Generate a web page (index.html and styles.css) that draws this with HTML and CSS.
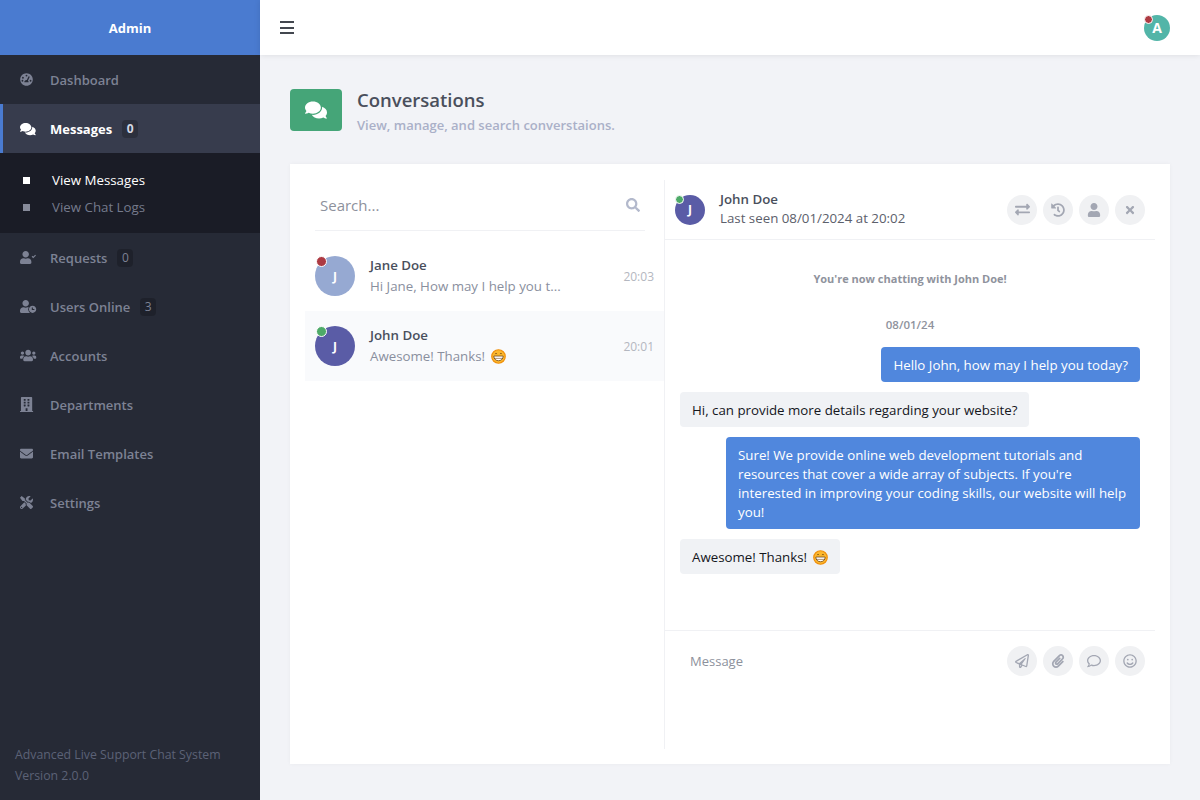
FILE: index.html
```html
<!DOCTYPE html>
<html lang="en">
<head>
    <meta charset="UTF-8">
    <meta name="viewport" content="width=device-width, initial-scale=1.0">
    <title>Conversations</title>
    <link rel="stylesheet" href="styles.css">
</head>
<body>
    <!-- icon set -->
    <svg class="icon-defs" xmlns="http://www.w3.org/2000/svg">
        <symbol id="i-comments" viewBox="0 0 576 512" preserveAspectRatio="xMinYMid meet"><path d="M416 192c0-88.4-93.1-160-208-160S0 103.6 0 192c0 34.3 14.1 65.9 38 92-13.4 30.2-35.5 54.2-35.8 54.5-2.2 2.3-2.8 5.7-1.5 8.7S4.8 352 8 352c36.6 0 66.9-12.3 88.7-25 32.2 15.7 70.3 25 111.3 25 114.9 0 208-71.6 208-160zm122 220c23.9-26 38-57.7 38-92 0-66.9-53.5-124.2-129.3-148.1.9 6.6 1.3 13.3 1.3 20.1 0 105.9-107.7 192-240 192-10.8 0-21.3-.8-31.7-1.9C207.8 439.6 281.8 480 368 480c41 0 79.1-9.2 111.3-25 21.8 12.7 52.1 25 88.7 25 3.2 0 6.1-1.9 7.3-4.8 1.3-2.9.7-6.3-1.5-8.7-.3-.3-22.4-24.2-35.8-54.5z"/></symbol>
        <symbol id="i-search" viewBox="0 0 512 512"><path d="M505 442.7L405.3 343c-4.5-4.5-10.6-7-17-7H372c27.6-35.3 44-79.7 44-128C416 93.1 322.9 0 208 0S0 93.1 0 208s93.1 208 208 208c48.3 0 92.7-16.4 128-44v16.3c0 6.4 2.5 12.5 7 17l99.7 99.7c9.4 9.4 24.6 9.4 33.9 0l28.3-28.3c9.4-9.4 9.4-24.6.1-34zM208 336c-70.7 0-128-57.2-128-128 0-70.7 57.2-128 128-128 70.7 0 128 57.2 128 128 0 70.7-57.2 128-128 128z"/></symbol>
        <symbol id="i-user" viewBox="0 0 448 512"><path d="M224 256c70.7 0 128-57.3 128-128S294.7 0 224 0 96 57.3 96 128s57.3 128 128 128zm89.6 32h-16.7c-22.2 10.2-46.9 16-72.9 16s-50.6-5.8-72.9-16h-16.7C60.2 288 0 348.2 0 422.4V464c0 26.5 21.5 48 48 48h352c26.5 0 48-21.5 48-48v-41.6c0-74.2-60.2-134.4-134.4-134.4z"/></symbol>
        <symbol id="i-user-check" viewBox="0 0 640 512" preserveAspectRatio="xMinYMid meet"><path d="M224 256c70.7 0 128-57.3 128-128S294.7 0 224 0 96 57.3 96 128s57.3 128 128 128zm89.6 32h-16.7c-22.2 10.2-46.9 16-72.9 16s-50.6-5.8-72.9-16h-16.7C60.2 288 0 348.2 0 422.4V464c0 26.5 21.5 48 48 48h352c26.5 0 48-21.5 48-48v-41.6c0-74.2-60.2-134.4-134.4-134.4z"/><path d="M474 206l48 48 92-92" fill="none" stroke="currentColor" stroke-width="44"/></symbol>
        <symbol id="i-user-clock" viewBox="0 0 640 512" preserveAspectRatio="xMinYMid meet"><path d="M224 256c70.7 0 128-57.3 128-128S294.7 0 224 0 96 57.3 96 128s57.3 128 128 128zm89.6 32h-16.7c-22.2 10.2-46.9 16-72.9 16s-50.6-5.8-72.9-16h-16.7C60.2 288 0 348.2 0 422.4V464c0 26.5 21.5 48 48 48h352c26.5 0 48-21.5 48-48v-41.6c0-74.2-60.2-134.4-134.4-134.4z"/><circle cx="496" cy="368" r="172" fill="#262a36"/><path fill-rule="evenodd" d="M496 224c-79.6 0-144 64.4-144 144s64.4 144 144 144 144-64.4 144-144-64.4-144-144-144zm70 170h-102v-100h44v56h58z"/></symbol>
        <symbol id="i-users" viewBox="0 0 640 512" preserveAspectRatio="xMinYMid meet"><path d="M96 224c35.3 0 64-28.7 64-64s-28.7-64-64-64-64 28.7-64 64 28.7 64 64 64zm448 0c35.3 0 64-28.7 64-64s-28.7-64-64-64-64 28.7-64 64 28.7 64 64 64zm32 32h-64c-17.6 0-33.5 7.1-45.1 18.6 40.3 22.1 68.9 62 75.1 109.4h66c17.7 0 32-14.3 32-32v-32c0-35.3-28.7-64-64-64zm-256 0c61.9 0 112-50.1 112-112S381.9 32 320 32 208 82.1 208 144s50.1 112 112 112zm76.8 32h-8.3c-20.8 10-43.9 16-68.5 16s-47.6-6-68.5-16h-8.3C179.6 288 128 339.6 128 403.2V432c0 26.5 21.5 48 48 48h288c26.5 0 48-21.5 48-48v-28.8c0-63.6-51.6-115.2-115.2-115.2zm-223.7-13.4C161.5 263.1 145.6 256 128 256H64c-35.3 0-64 28.7-64 64v32c0 17.7 14.3 32 32 32h65.9c6.3-47.4 34.9-87.3 75.2-109.4z"/></symbol>
        <symbol id="i-building" viewBox="0 0 448 512" preserveAspectRatio="xMinYMid meet"><path d="M436 480h-20V24c0-13.255-10.745-24-24-24H56C42.745 0 32 10.745 32 24v456H12c-6.627 0-12 5.373-12 12v20h448v-20c0-6.627-5.373-12-12-12zM128 76c0-6.627 5.373-12 12-12h40c6.627 0 12 5.373 12 12v40c0 6.627-5.373 12-12 12h-40c-6.627 0-12-5.373-12-12V76zm0 96c0-6.627 5.373-12 12-12h40c6.627 0 12 5.373 12 12v40c0 6.627-5.373 12-12 12h-40c-6.627 0-12-5.373-12-12v-40zm52 148h-40c-6.627 0-12-5.373-12-12v-40c0-6.627 5.373-12 12-12h40c6.627 0 12 5.373 12 12v40c0 6.627-5.373 12-12 12zm76 160h-64v-84c0-6.627 5.373-12 12-12h40c6.627 0 12 5.373 12 12v84zm64-172c0 6.627-5.373 12-12 12h-40c-6.627 0-12-5.373-12-12v-40c0-6.627 5.373-12 12-12h40c6.627 0 12 5.373 12 12v40zm0-96c0 6.627-5.373 12-12 12h-40c-6.627 0-12-5.373-12-12v-40c0-6.627 5.373-12 12-12h40c6.627 0 12 5.373 12 12v40zm0-96c0 6.627-5.373 12-12 12h-40c-6.627 0-12-5.373-12-12V76c0-6.627 5.373-12 12-12h40c6.627 0 12 5.373 12 12v40z"/></symbol>
        <symbol id="i-envelope" viewBox="0 0 512 512" preserveAspectRatio="xMinYMid meet"><path d="M502.3 190.8c3.9-3.1 9.7-.2 9.7 4.7V400c0 26.5-21.5 48-48 48H48c-26.5 0-48-21.5-48-48V195.6c0-5 5.7-7.8 9.7-4.7 22.4 17.4 52.1 39.5 154.1 113.6 21.1 15.4 56.7 47.8 92.2 47.6 35.7.3 72-32.8 92.3-47.6 102-74.1 131.6-96.3 154-113.7zM256 320c23.2.4 56.6-29.2 73.4-41.4 132.7-96.3 142.8-104.7 173.4-128.7 5.8-4.5 9.2-11.5 9.2-18.9v-19c0-26.5-21.5-48-48-48H48C21.5 64 0 85.5 0 112v19c0 7.4 3.4 14.3 9.2 18.9 30.6 23.9 40.7 32.4 173.4 128.7 16.8 12.2 50.2 41.8 73.4 41.4z"/></symbol>
        <symbol id="i-tools" viewBox="0 0 512 512" preserveAspectRatio="xMinYMid meet"><path d="M501.1 395.7L384 278.6c-23.1-23.1-57.6-27.6-85.4-13.9L192 158.1V96L64 0 0 64l96 128h62.1l106.6 106.6c-13.6 27.8-9.2 62.3 13.9 85.4l117.1 117.1c14.6 14.6 38.2 14.6 52.7 0l52.7-52.7c14.5-14.6 14.5-38.2 0-52.7zM331.7 225c28.3 0 54.9 11 74.9 31l19.4 19.4c15.8-6.9 30.8-16.5 43.8-29.5 37.1-37.1 49.7-89.3 37.9-136.7-2.2-9-13.5-12.1-20.1-5.5l-74.4 74.4-67.9-11.3L334 98.9l74.4-74.4c6.6-6.6 3.4-17.9-5.7-20.2-47.4-11.7-99.6.9-136.6 37.9-28.5 28.5-41.9 66.1-41.2 103.6l82.1 82.1c8.1-1.9 16.5-2.9 24.7-2.9zm-103.9 82l-56.7-56.7L18.7 402.8c-25 25-25 65.5 0 90.5s65.5 25 90.5 0l123.6-123.6c-7.6-19.9-9.9-41.6-5-62.7zM64 472c-13.2 0-24-10.8-24-24 0-13.3 10.7-24 24-24s24 10.7 24 24c0 13.2-10.7 24-24 24z"/></symbol>
        <symbol id="i-gauge" viewBox="0 0 512 512" preserveAspectRatio="xMinYMid meet"><path fill-rule="evenodd" d="M256 8C119 8 8 119 8 256s111 248 248 248 248-111 248-248S393 8 256 8zm0 56a36 36 0 1 1 0 72 36 36 0 0 1 0-72zM116 150a36 36 0 1 1 0 72 36 36 0 0 1 0-72zm-20 120a36 36 0 1 1 0 72 36 36 0 0 1 0-72zm320 0a36 36 0 1 1 0 72 36 36 0 0 1 0-72zM340 130l44 20-72 156c18 12 30 30 30 54H170c0-46 38-84 84-84 5 0 11 .6 16 1.5z"/></symbol>
        <symbol id="i-exchange" viewBox="0 0 512 512"><path d="M0 168v-16c0-13.255 10.745-24 24-24h360V80c0-21.367 25.899-32.042 40.971-16.971l80 80c9.372 9.373 9.372 24.569 0 33.941l-80 80C409.956 272.982 384 262.456 384 240v-48H24c-13.255 0-24-10.745-24-24zm488 152H128v-48c0-21.314-25.862-32.08-40.971-16.971l-80 80c-9.372 9.373-9.372 24.569 0 33.941l80 80C102.057 464.982 128 454.365 128 432v-48h360c13.255 0 24-10.745 24-24v-16c0-13.255-10.745-24-24-24z"/></symbol>
        <symbol id="i-history" viewBox="0 0 512 512"><path d="M504 255.531c.253 136.64-111.18 248.372-247.82 248.468-59.015.042-113.223-20.53-155.822-54.911-11.077-8.94-11.905-25.541-1.839-35.607l11.267-11.267c8.609-8.609 22.353-9.551 31.891-1.984C173.062 425.135 212.781 440 256 440c101.705 0 184-82.311 184-184 0-101.705-82.311-184-184-184-48.814 0-93.149 18.969-126.068 49.932l50.754 50.754c10.08 10.08 2.941 27.314-11.313 27.314H24c-8.837 0-16-7.163-16-16V38.627c0-14.254 17.234-21.393 27.314-11.314l49.372 49.372C129.209 34.136 189.552 8 256 8c136.81 0 247.747 110.78 248 247.531zm-180.912 78.784l9.823-12.63c8.138-10.463 6.253-25.542-4.21-33.679L288 256.349V152c0-13.255-10.745-24-24-24h-16c-13.255 0-24 10.745-24 24v135.651l65.409 50.874c10.463 8.137 25.541 6.253 33.679-4.21z"/></symbol>
        <symbol id="i-times" viewBox="0 0 352 512"><path d="M242.72 256l100.07-100.07c12.28-12.28 12.28-32.19 0-44.48l-22.24-22.24c-12.28-12.28-32.19-12.28-44.48 0L176 189.28 75.93 89.21c-12.28-12.28-32.19-12.28-44.48 0L9.21 111.45c-12.28 12.28-12.28 32.19 0 44.48L109.28 256 9.21 356.07c-12.28 12.28-12.28 32.19 0 44.48l22.24 22.24c12.28 12.28 32.2 12.28 44.48 0L176 322.72l100.07 100.07c12.28 12.28 32.2 12.28 44.48 0l22.24-22.24c12.28-12.28 12.28-32.19 0-44.48L242.72 256z"/></symbol>
        <symbol id="i-plane" viewBox="0 0 512 512"><path d="M440 6.5L24 246.4c-34.4 19.9-31.1 70.8 5.7 85.9L144 379.6V464c0 46.4 59.2 65.5 86.6 28.6l43.8-59.1 111.9 46.2c5.9 2.4 12.1 3.6 18.3 3.6 8.2 0 16.3-2.1 23.6-6.2 12.8-7.2 21.6-20 23.9-34.5l59.4-387.2c6.1-40.1-36.9-68.8-71.5-48.9zM192 464v-64.6l36.6 15.1L192 464zm212.6-28.7l-153.8-63.5L391 169.5c10.7-15.5-9.5-33.5-23.7-21.2L155.8 332.6 48 288 464 48l-59.4 387.3z"/></symbol>
        <symbol id="i-clip" viewBox="0 0 448 512"><path d="M43.246 466.142c-58.43-60.289-57.341-157.511 1.386-217.581L254.392 34c44.316-45.332 116.351-45.336 160.671 0 43.89 44.894 43.943 117.329 0 162.276L232.214 383.128c-29.855 30.537-78.633 30.111-107.982-.998-28.275-29.97-27.368-77.473 1.452-106.953l143.743-146.835c6.182-6.314 16.312-6.422 22.626-.241l22.861 22.379c6.315 6.182 6.422 16.312.241 22.626L171.427 319.927c-4.932 5.045-5.236 13.428-.648 18.292 4.372 4.634 11.245 4.711 15.688.165l182.849-186.851c19.613-20.05 19.613-52.524-.011-72.564-19.189-19.627-49.957-19.637-69.154 0L90.39 293.295c-34.763 35.56-35.299 93.12-1.191 128.313 34.01 35.093 88.985 35.137 123.058.286l172.06-175.999c6.177-6.319 16.307-6.433 22.626-.256l22.877 22.364c6.319 6.177 6.434 16.307.256 22.626l-172.06 175.998c-59.576 60.938-155.943 60.216-214.77-.485z"/></symbol>
        <symbol id="i-comment" viewBox="0 0 512 512"><path d="M256 32C114.6 32 0 125.1 0 240c0 49.6 21.4 95 57 130.7C44.5 421.1 2.7 466 2.2 466.5c-2.2 2.3-2.8 5.7-1.5 8.7S4.8 480 8 480c66.3 0 116-31.8 140.6-51.4 32.7 12.3 69 19.4 107.4 19.4 141.4 0 256-93.1 256-208S397.4 32 256 32zm0 368c-26.7 0-53.1-4.1-78.4-12.1l-22.7-7.2-19.5 13.8c-14.3 10.1-33.9 21.4-57.5 29 7.3-12.1 14.4-25.7 19.9-40.2l10.6-28.1-20.6-21.8C69.7 314.1 48 282.2 48 240c0-88.2 93.3-160 208-160s208 71.8 208 160-93.3 160-208 160z"/></symbol>
        <symbol id="i-smile" viewBox="0 0 496 512"><path d="M248 8C111 8 0 119 0 256s111 248 248 248 248-111 248-248S385 8 248 8zm0 448c-110.3 0-200-89.7-200-200S137.7 56 248 56s200 89.7 200 200-89.7 200-200 200zm-80-216c17.7 0 32-14.3 32-32s-14.3-32-32-32-32 14.3-32 32 14.3 32 32 32zm160 0c17.7 0 32-14.3 32-32s-14.3-32-32-32-32 14.3-32 32 14.3 32 32 32zm4 72.6c-20.8 25-51.5 39.4-84 39.4s-63.2-14.3-84-39.4c-8.5-10.2-23.7-11.5-33.8-3.1-10.2 8.5-11.5 23.6-3.1 33.8 30 36 74.1 56.6 120.9 56.6s90.9-20.6 120.9-56.6c8.5-10.2 7.1-25.3-3.1-33.8-10.1-8.4-25.3-7.1-33.8 3.1z"/></symbol>
        <symbol id="i-grin" viewBox="0 0 16 16">
            <circle cx="8" cy="8" r="7.2" fill="#fcb82e" stroke="#f0900c" stroke-width="1.3"/>
            <path d="M4.4 5.4c.4-.9 1.6-.9 2 0M9.6 5.4c.4-.9 1.6-.9 2 0" fill="none" stroke="#6b3f10" stroke-width=".9"/>
            <path d="M3 7.5h10c0 3-2.2 5-5 5s-5-2-5-5z" fill="#fff" stroke="#6b3f10" stroke-width=".8"/>
            <path d="M3.3 10h9.400" stroke="#6b3f10" stroke-width=".6"/>
        </symbol>
    </svg>

    <div class="app">
        <aside class="sidebar">
            <div class="brand">Admin</div>
            <nav class="nav">
                <a class="nav-item" href="#"><svg class="nav-icon"><use href="#i-gauge"/></svg><span>Dashboard</span></a>
                <a class="nav-item active" href="#"><svg class="nav-icon tall"><use href="#i-comments"/></svg><span>Messages</span><span class="count">0</span></a>
                <div class="sub-nav">
                    <a class="sub-item active" href="#">View Messages</a>
                    <a class="sub-item" href="#">View Chat Logs</a>
                </div>
                <a class="nav-item" href="#"><svg class="nav-icon"><use href="#i-user-check"/></svg><span>Requests</span><span class="count">0</span></a>
                <a class="nav-item" href="#"><svg class="nav-icon"><use href="#i-user-clock"/></svg><span>Users Online</span><span class="count">3</span></a>
                <a class="nav-item" href="#"><svg class="nav-icon"><use href="#i-users"/></svg><span>Accounts</span></a>
                <a class="nav-item" href="#"><svg class="nav-icon taller"><use href="#i-building"/></svg><span>Departments</span></a>
                <a class="nav-item" href="#"><svg class="nav-icon"><use href="#i-envelope"/></svg><span>Email Templates</span></a>
                <a class="nav-item" href="#"><svg class="nav-icon"><use href="#i-tools"/></svg><span>Settings</span></a>
            </nav>
            <div class="sidebar-footer">
                <div>Advanced Live Support Chat System</div>
                <div>Version 2.0.0</div>
            </div>
        </aside>

        <div class="main">
            <header class="topbar">
                <button class="menu-btn" aria-label="Menu"><span></span><span></span><span></span></button>
                <div class="avatar avatar-sm teal">A<i class="dot red"></i></div>
            </header>

            <main class="content">
                <div class="page-title">
                    <div class="page-icon"><svg><use href="#i-comments"/></svg></div>
                    <div>
                        <h2>Conversations</h2>
                        <p>View, manage, and search converstaions.</p>
                    </div>
                </div>

                <section class="card">
                    <div class="conversations">
                        <div class="search">
                            <input type="text" placeholder="Search...">
                            <svg><use href="#i-search"/></svg>
                        </div>
                        <div class="conv">
                            <div class="avatar light">J<i class="dot red"></i></div>
                            <div class="conv-text">
                                <div class="conv-name">Jane Doe</div>
                                <div class="conv-msg">Hi Jane, How may I help you t...</div>
                            </div>
                            <div class="conv-time">20:03</div>
                        </div>
                        <div class="conv selected">
                            <div class="avatar indigo">J<i class="dot green"></i></div>
                            <div class="conv-text">
                                <div class="conv-name">John Doe</div>
                                <div class="conv-msg">Awesome! Thanks! <svg class="emoji"><use href="#i-grin"/></svg></div>
                            </div>
                            <div class="conv-time">20:01</div>
                        </div>
                    </div>

                    <div class="chat">
                        <div class="chat-header">
                            <div class="avatar avatar-md indigo">J<i class="dot green"></i></div>
                            <div class="chat-who">
                                <div class="conv-name">John Doe</div>
                                <div class="last-seen">Last seen 08/01/2024 at 20:02</div>
                            </div>
                            <div class="actions">
                                <button class="round-btn"><svg class="wide"><use href="#i-exchange"/></svg></button>
                                <button class="round-btn"><svg><use href="#i-history"/></svg></button>
                                <button class="round-btn"><svg><use href="#i-user"/></svg></button>
                                <button class="round-btn"><svg class="small"><use href="#i-times"/></svg></button>
                            </div>
                        </div>
                        <div class="messages">
                            <div class="note">You're now chatting with John Doe!</div>
                            <div class="date">08/01/24</div>
                            <div class="bubble mine">Hello John, how may I help you today?</div>
                            <div class="bubble">Hi, can provide more details regarding your website?</div>
                            <div class="bubble mine">Sure! We provide online web development tutorials and resources that cover a wide array of subjects. If you're interested in improving your coding skills, our website will help you!</div>
                            <div class="bubble">Awesome! Thanks! <svg class="emoji"><use href="#i-grin"/></svg></div>
                        </div>
                        <div class="composer">
                            <input type="text" placeholder="Message">
                            <div class="actions">
                                <button class="round-btn"><svg><use href="#i-plane"/></svg></button>
                                <button class="round-btn"><svg><use href="#i-clip"/></svg></button>
                                <button class="round-btn"><svg><use href="#i-comment"/></svg></button>
                                <button class="round-btn"><svg><use href="#i-smile"/></svg></button>
                            </div>
                        </div>
                    </div>
                </section>
            </main>
        </div>
    </div>
</body>
</html>
```

FILE: styles.css
```css
* {
    box-sizing: border-box;
}

body {
    margin: 0;
    font-family: "Open Sans", "Noto Sans", Arial, sans-serif;
    font-size: 13.3px;
    color: #4a4f5c;
    background-color: #f2f3f7;
    overflow: hidden;
}

a {
    text-decoration: none;
    color: inherit;
}

.icon-defs {
    display: none;
}

.app {
    display: flex;
    height: 100vh;
}

/* sidebar */
.sidebar {
    width: 260px;
    flex-shrink: 0;
    display: flex;
    flex-direction: column;
    background-color: #262a36;
}

.brand {
    height: 55px;
    display: flex;
    align-items: center;
    justify-content: center;
    background-color: #4a7bd0;
    color: #fff;
    font-size: 13px;
    font-weight: 700;
}

.nav-item {
    height: 49px;
    display: flex;
    align-items: center;
    padding-left: 20px;
    color: #7d8294;
    font-size: 13px;
    font-weight: 600;
}

.nav-item.active {
    padding-left: 17px;
    border-left: 3px solid #4a7bd0;
    background-color: #373c4d;
    color: #fff;
    font-weight: 700;
}

.nav-icon {
    width: 30px;
    height: 13px;
    flex-shrink: 0;
    fill: #7d8294;
    color: #7d8294;
}

.nav-icon.tall {
    height: 14px;
}

.nav-icon.taller {
    height: 15px;
}

.nav-item.active .nav-icon {
    fill: #fff;
}

.count {
    min-width: 16px;
    height: 18px;
    margin-left: 10px;
    padding: 0 4px;
    border-radius: 4px;
    background-color: rgba(0, 0, 0, 0.2);
    font-size: 12px;
    line-height: 18px;
    font-weight: 500;
    text-align: center;
}

.active .count {
    color: #d4d8e4;
    font-weight: 700;
}

.sub-nav {
    padding: 13px 0;
    background-color: #1a1c26;
}

.sub-item {
    position: relative;
    display: flex;
    align-items: center;
    height: 27px;
    padding-left: 52px;
    color: #757a8c;
}

.sub-item::before {
    content: "";
    position: absolute;
    left: 23px;
    top: 11px;
    width: 7px;
    height: 7px;
    background-color: #878b9a;
}

.sub-item.active {
    color: #fff;
}

.sub-item.active::before {
    background-color: #fff;
}

.sidebar-footer {
    margin-top: auto;
    padding: 0 15px 14px;
    color: #5c6277;
    font-size: 12.3px;
    line-height: 21px;
}

/* top bar */
.main {
    flex: 1;
    min-width: 0;
    display: flex;
    flex-direction: column;
}

.topbar {
    height: 55px;
    flex-shrink: 0;
    display: flex;
    align-items: center;
    justify-content: space-between;
    padding: 0 30px 0 20px;
    background-color: #fff;
    box-shadow: 0 0 6px rgba(0, 0, 0, 0.1);
}

.menu-btn {
    width: 14px;
    height: 13px;
    padding: 0;
    display: flex;
    flex-direction: column;
    justify-content: space-between;
    border: none;
    background: none;
}

.menu-btn span {
    display: block;
    height: 2px;
    background-color: #43474f;
}

/* avatars */
.avatar {
    position: relative;
    width: 40px;
    height: 40px;
    flex-shrink: 0;
    display: flex;
    align-items: center;
    justify-content: center;
    border-radius: 50%;
    color: #fff;
    font-size: 12px;
    font-weight: 700;
}

.avatar-md {
    width: 30px;
    height: 30px;
}

.avatar-sm {
    width: 26px;
    height: 26px;
    font-size: 14px;
}

.teal {
    background-color: #52b5a8;
}

.light {
    background-color: #96a9d2;
}

.indigo {
    background-color: #5a5ca6;
}

.dot {
    position: absolute;
    left: 1px;
    top: 0;
    width: 11px;
    height: 11px;
    border: 1.5px solid #fff;
    border-radius: 50%;
}

.avatar-md .dot,
.avatar-sm .dot {
    left: 0;
    top: 0;
    width: 9px;
    height: 9px;
}

.red {
    background-color: #ad3a42;
}

.green {
    background-color: #4eaa68;
}

/* page heading */
.content {
    flex: 1;
    padding: 34px 30px 36px;
    min-height: 0;
    display: flex;
    flex-direction: column;
}

.page-title {
    display: flex;
    align-items: flex-start;
    margin-bottom: 29px;
}

.page-icon {
    width: 52px;
    height: 42px;
    margin-right: 15px;
    display: flex;
    align-items: center;
    justify-content: center;
    border-radius: 4px;
    background-color: #45a578;
}

.page-icon svg {
    width: 22px;
    height: 20px;
    fill: #fff;
}

.page-title h2 {
    margin: 0 0 4px;
    font-size: 18.5px;
    line-height: 22px;
    font-weight: 600;
    color: #4a4f5c;
}

.page-title p {
    margin: 0;
    font-size: 13px;
    line-height: 20px;
    font-weight: 600;
    color: #aab0c8;
}

/* card */
.card {
    flex: 1;
    min-height: 0;
    display: flex;
    padding: 16px 15px 15px;
    background-color: #fff;
    box-shadow: 0 0 4px rgba(0, 0, 0, 0.04);
}

.conversations {
    width: 360px;
    flex-shrink: 0;
    border-right: 1px solid #f0f1f4;
}

.search {
    display: flex;
    align-items: center;
    height: 51px;
    margin: 0 19px 10px 10px;
    border-bottom: 1px solid #f0f1f4;
}

.search input,
.composer input {
    flex: 1;
    min-width: 0;
    padding: 0;
    border: none;
    outline: none;
    background: none;
    font-family: inherit;
    font-size: 13px;
}

.search input {
    padding-left: 5px;
    font-size: 15px;
}

.search input::placeholder,
.composer input::placeholder {
    color: #8d919c;
    opacity: 1;
}

.search svg {
    width: 14px;
    height: 14px;
    margin-right: 5px;
    fill: #b3b9cc;
}

.conv {
    display: flex;
    align-items: center;
    height: 70px;
    padding: 0 10px;
}

.conv.selected {
    background-color: #f9fafc;
}

.conv-text {
    flex: 1;
    min-width: 0;
    margin-left: 15px;
    padding-top: 1px;
}

.conv-name {
    font-weight: 600;
    line-height: 19px;
    color: #4a4f5c;
}

.conv-msg {
    display: flex;
    align-items: center;
    gap: 4px;
    margin-top: 1px;
    line-height: 21px;
    color: #8a8f9e;
}

.conv-time {
    font-size: 12px;
    color: #b4b7c0;
}

.emoji {
    width: 15px;
    height: 15px;
    margin-left: 2px;
    vertical-align: -3px;
}

/* chat pane */
.chat {
    flex: 1;
    min-width: 0;
    display: flex;
    flex-direction: column;
}

.chat-header {
    height: 60px;
    flex-shrink: 0;
    display: flex;
    align-items: center;
    padding: 0 10px;
    border-bottom: 1px solid #f0f1f4;
}

.chat-who {
    flex: 1;
    margin-left: 15px;
    padding-bottom: 2px;
}

.last-seen {
    line-height: 19px;
    color: #5c606b;
}

.actions {
    display: flex;
    gap: 6px;
}

.round-btn {
    width: 30px;
    height: 30px;
    padding: 0;
    display: flex;
    align-items: center;
    justify-content: center;
    border: none;
    border-radius: 50%;
    background-color: #f0f1f3;
}

.round-btn svg {
    width: 14px;
    height: 14px;
    fill: #a3a7b3;
}

.round-btn svg.wide {
    width: 15px;
    height: 15px;
}

.round-btn svg.small {
    width: 12px;
    height: 12px;
}

.messages {
    flex: 1;
    min-height: 0;
    display: flex;
    flex-direction: column;
    gap: 10px;
    padding: 0 15px;
}

.note,
.date {
    align-self: center;
    font-size: 11px;
    font-weight: 700;
    color: #8f939d;
}

.note {
    margin-top: 31px;
    line-height: 16px;
}

.date {
    margin-top: 20px;
    margin-bottom: 4px;
    font-size: 11.5px;
    line-height: 16px;
    font-weight: 600;
}

.bubble {
    align-self: flex-start;
    max-width: 90%;
    padding: 9px 12px 7px;
    border-radius: 4px;
    background-color: #f0f2f5;
    color: #14161c;
    line-height: 19px;
}

.bubble.mine {
    align-self: flex-end;
    background-color: #5087dd;
    color: #fff;
}

.composer {
    height: 119px;
    flex-shrink: 0;
    display: flex;
    align-items: flex-start;
    padding: 15px 10px 0 25px;
    border-top: 1px solid #f0f1f4;
}

.composer input {
    height: 30px;
}
```
